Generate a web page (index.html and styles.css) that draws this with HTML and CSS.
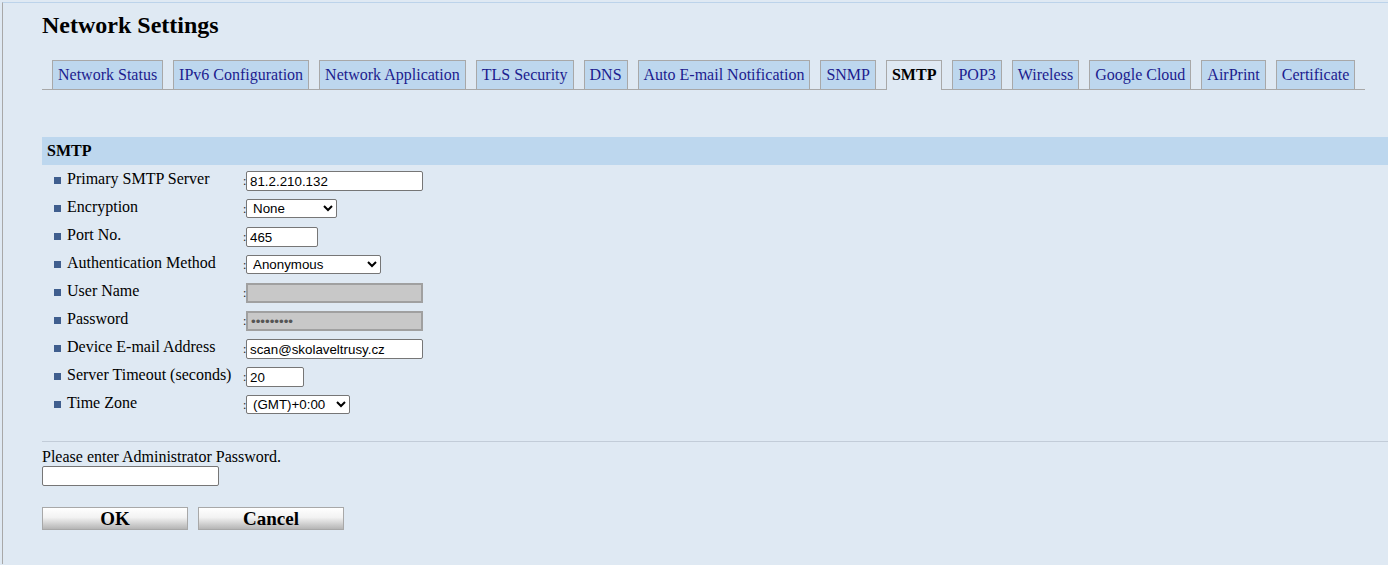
FILE: index.html
```html
<!DOCTYPE html>
<html>
<head>
<meta charset="utf-8">
<link rel="stylesheet" href="styles.css">
</head>
<body>
<div class="frame">
  <h1 class="title">Network Settings</h1>
  <div class="tabs">
    <span class="tab">Network Status</span>
    <span class="tab">IPv6 Configuration</span>
    <span class="tab">Network Application</span>
    <span class="tab">TLS Security</span>
    <span class="tab">DNS</span>
    <span class="tab">Auto E-mail Notification</span>
    <span class="tab">SNMP</span>
    <span class="tab active">SMTP</span>
    <span class="tab">POP3</span>
    <span class="tab">Wireless</span>
    <span class="tab">Google Cloud</span>
    <span class="tab">AirPrint</span>
    <span class="tab">Certificate</span>
  </div>

  <div class="section-head">SMTP</div>
  <div class="form">
    <div class="row"><span class="label"><i class="bullet"></i>Primary SMTP Server</span><span class="colon">:</span><input class="field w177" type="text" value="81.2.210.132"></div>
    <div class="row"><span class="label"><i class="bullet"></i>Encryption</span><span class="colon">:</span><select class="sel w91"><option>None</option></select></div>
    <div class="row"><span class="label"><i class="bullet"></i>Port No.</span><span class="colon">:</span><input class="field w72" type="text" value="465"></div>
    <div class="row"><span class="label"><i class="bullet"></i>Authentication Method</span><span class="colon">:</span><select class="sel w135"><option>Anonymous</option></select></div>
    <div class="row"><span class="label"><i class="bullet"></i>User Name</span><span class="colon">:</span><input class="field w177 off" type="text" value="" disabled></div>
    <div class="row"><span class="label"><i class="bullet"></i>Password</span><span class="colon">:</span><input class="field w177 off" type="password" value="abcdefghi" disabled></div>
    <div class="row"><span class="label"><i class="bullet"></i>Device E-mail Address</span><span class="colon">:</span><input class="field w177" type="text" value="scan@skolaveltrusy.cz"></div>
    <div class="row"><span class="label"><i class="bullet"></i>Server Timeout (seconds)</span><span class="colon">:</span><input class="field w58" type="text" value="20"></div>
    <div class="row"><span class="label"><i class="bullet"></i>Time Zone</span><span class="colon">:</span><select class="sel w104"><option>(GMT)+0:00</option></select></div>
  </div>

  <hr class="sep">
  <div class="admin">
    <div class="admin-text">Please enter Administrator Password.</div>
    <input class="field w177" type="password">
  </div>
  <div class="buttons">
    <button class="btn">OK</button>
    <button class="btn">Cancel</button>
  </div>
</div>
</body>
</html>
```

FILE: styles.css
```css
html, body {
  margin: 0;
  padding: 0;
  background: #dfe9f3;
}
body {
  font-family: "Liberation Serif", "Times New Roman", serif;
  font-size: 16px;
  color: #000;
}
.frame {
  margin: 2px 0 0 2px;
  border-top: 1px solid #bcd3ea;
  border-left: 1px solid #a8a8a8;
  height: 562px;
  box-sizing: border-box;
  padding-left: 39px;
}
.title {
  margin: 9px 0 0 0;
  font-size: 24px;
  font-weight: bold;
  line-height: 26px;
}
.tabs {
  display: flex;
  gap: 10px;
  margin-top: 22px;
  width: 1323px;
  padding-left: 10px;
  box-sizing: border-box;
  border-bottom: 1px solid #a8a8a8;
  height: 30px;
}
.tab {
  display: block;
  height: 29px;
  box-sizing: border-box;
  border: 1px solid #a8a8a8;
  border-bottom: none;
  background: #bdd7ee;
  color: #1c1c8e;
  padding: 4px 5px 0 5px;
  line-height: 20px;
  white-space: nowrap;
}
.tab.active {
  background: #dfe9f3;
  color: #000;
  font-weight: bold;
  height: 30px;
}
.section-head {
  margin-top: 47px;
  height: 28px;
  background: #bdd7ee;
  font-weight: bold;
  line-height: 28px;
  padding-left: 5px;
}
.form {
  padding-top: 2px;
}
.row {
  display: flex;
  align-items: center;
  height: 28px;
}
.label {
  display: flex;
  align-items: center;
  width: 189px;
  padding-left: 12px;
  white-space: nowrap;
  line-height: 18px;
  margin-top: -4px;
}
.bullet {
  display: inline-block;
  width: 7px;
  height: 7px;
  background: #3f5e8e;
  margin-right: 6px;
  margin-top: 2px;
}
.colon {
  width: 3px;
  font-size: 12px;
  line-height: 12px;
  color: #222;
}
.field {
  height: 20px;
  box-sizing: border-box;
  border: 1px solid #767676;
  border-radius: 2px;
  background: #fff;
  font-family: "Liberation Sans", Arial, sans-serif;
  font-size: 13.33px;
  padding: 0 3px;
  margin: 0;
  color: #000;
}
.field.off {
  background: #c8c8c8;
  border: 2px solid #a0a0a0;
  border-radius: 0;
  color: #555;
}
.sel {
  height: 19px;
  box-sizing: border-box;
  border: 1px solid #767676;
  border-radius: 2px;
  background: #fff;
  font-family: "Liberation Sans", Arial, sans-serif;
  font-size: 13.33px;
  padding: 0 0 0 2px;
  margin: -2px 0 0 0;
  color: #000;
}
.w177 { width: 177px; }
.w91 { width: 91px; }
.w72 { width: 72px; }
.w135 { width: 135px; }
.w58 { width: 58px; }
.w104 { width: 104px; }
.sep {
  margin: 22px 0 0 0;
  border: none;
  border-top: 1px solid #c2ccd8;
  height: 0;
}
.admin {
  margin-top: 6px;
}
.admin-text {
  line-height: 17px;
}
.admin .field {
  display: block;
  margin-top: 1px;
}
.buttons {
  display: flex;
  gap: 10px;
  margin-top: 21px;
}
.btn {
  width: 146px;
  height: 23px;
  box-sizing: border-box;
  border: 1px solid #a8a8a8;
  background: linear-gradient(#ffffff 0%, #f2f2f2 45%, #b5b5b5 100%);
  font-family: "Liberation Serif", "Times New Roman", serif;
  font-weight: bold;
  font-size: 19px;
  line-height: 20px;
  padding: 0;
  color: #000;
}
```
